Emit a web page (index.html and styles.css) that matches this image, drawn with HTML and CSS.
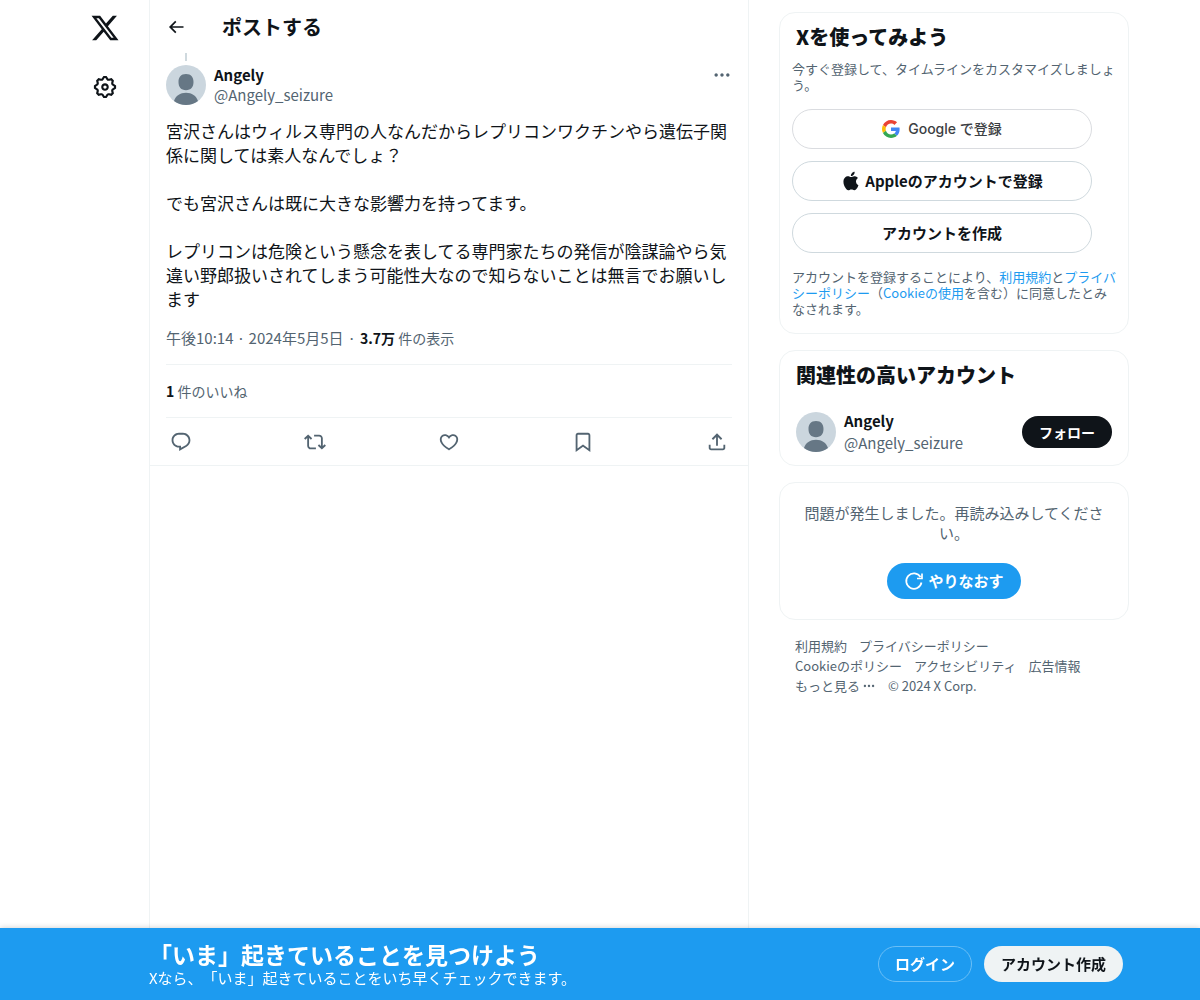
FILE: index.html
```html
<!DOCTYPE html>
<html lang="ja">
<head>
  <meta charset="UTF-8" />
  <meta name="viewport" content="width=device-width, initial-scale=1.0"/>
  <title>Angely / X</title>
  <link rel="stylesheet" href="styles.css">
</head>
<body>
  <div class="layout">
    <nav class="rail">
      <a href="#" class="rail-link" aria-label="X">
        <svg class="icon-logo" viewBox="0 0 24 24"><path d="M18.244 2.25h3.308l-7.227 8.26 8.502 11.24H16.17l-5.214-6.817L4.99 21.75H1.68l7.73-8.835L1.254 2.25H8.08l4.713 6.231zm-1.161 17.52h1.833L7.084 4.126H5.117z"/></svg>
      </a>
      <a href="#" class="rail-link" aria-label="設定">
        <svg class="icon-settings" viewBox="0 0 24 24"><path d="M10.54 1.75h2.92l1.57 2.36c.11.17.32.25.53.21l2.53-.59 2.17 2.17-.58 2.54c-.05.2.04.41.21.53l2.36 1.57v2.92l-2.36 1.57c-.17.12-.26.33-.21.53l.58 2.54-2.17 2.17-2.53-.59c-.21-.04-.42.04-.53.21l-1.57 2.36h-2.92l-1.58-2.36c-.11-.17-.32-.25-.52-.21l-2.54.59-2.17-2.17.58-2.54c.05-.2-.03-.41-.21-.53l-2.35-1.57v-2.92L4.1 8.97c.18-.12.26-.33.21-.53L3.73 5.9 5.9 3.73l2.54.59c.2.04.41-.04.52-.21l1.58-2.36zm1.07 2l-.98 1.47C10.05 6.08 9 6.5 7.99 6.27l-1.46-.34-.6.6.33 1.46c.24 1.01-.18 2.07-1.05 2.64l-1.46.98v.78l1.46.98c.87.57 1.29 1.63 1.05 2.64l-.33 1.46.6.6 1.46-.34c1.01-.23 2.06.19 2.64 1.05l.98 1.47h.78l.97-1.47c.58-.86 1.63-1.28 2.65-1.05l1.45.34.61-.6-.34-1.46c-.23-1.01.18-2.07 1.05-2.64l1.47-.98v-.78l-1.47-.98c-.87-.57-1.28-1.63-1.05-2.64l.34-1.46-.61-.6-1.45.34c-1.02.23-2.07-.19-2.65-1.05l-.97-1.47h-.78zM12 10.5c-.83 0-1.5.67-1.5 1.5s.67 1.5 1.5 1.5c.82 0 1.5-.67 1.5-1.5s-.68-1.5-1.5-1.5zM8.5 12c0-1.93 1.56-3.5 3.5-3.5 1.93 0 3.5 1.57 3.5 3.5s-1.57 3.5-3.5 3.5c-1.94 0-3.5-1.57-3.5-3.5z"/></svg>
      </a>
    </nav>

    <main class="timeline">
      <header class="timeline-header">
        <button class="icon-button" aria-label="戻る">
          <svg class="icon-back" viewBox="0 0 24 24"><path d="M7.414 13l5.043 5.04-1.414 1.42L3.586 12l7.457-7.46 1.414 1.42L7.414 11H21v2H7.414z"/></svg>
        </button>
        <h1>ポストする</h1>
      </header>

      <article class="post">
        <div class="thread-line"></div>
        <div class="post-author">
          <svg class="avatar" viewBox="0 0 40 40">
            <circle cx="20" cy="20" r="20" fill="#cbd6de"/>
            <path d="M20 9c5.200 0 7.500 3.300 7.500 8 0 5-2.500 8.200-7.500 8.200s-7.500-3.200-7.500-8.200c0-4.700 2.300-8 7.500-8zM8 36c1.600-5.300 6.200-8.300 12-8.300S30.400 30.700 32 36a20 20 0 0 1-24 0z" fill="#667785"/>
          </svg>
          <div class="user-names">
            <a href="#" class="user-name">Angely</a>
            <a href="#" class="user-handle">@Angely_seizure</a>
          </div>
          <button class="icon-button more" aria-label="もっと見る">
            <svg class="icon-more" viewBox="0 0 24 24"><path d="M3 12c0-1.100.9-2 2-2s2 .9 2 2-.9 2-2 2-2-.9-2-2zm9 2c1.100 0 2-.9 2-2s-.9-2-2-2-2 .9-2 2 .9 2 2 2zm7 0c1.100 0 2-.9 2-2s-.9-2-2-2-2 .9-2 2 .9 2 2 2z"/></svg>
          </button>
        </div>

        <div class="post-text">宮沢さんはウィルス専門の人なんだからレプリコンワクチンやら遺伝子関係に関しては素人なんでしょ？

でも宮沢さんは既に大きな影響力を持ってます。

レプリコンは危険という懸念を表してる専門家たちの発信が陰謀論やら気違い野郎扱いされてしまう可能性大なので知らないことは無言でお願いします</div>

        <div class="post-meta">
          <a href="#" class="post-date">午後10:14 · 2024年5月5日</a>
          <span>·</span>
          <span class="count"><strong>3.7万</strong> 件の表示</span>
        </div>
        <div class="post-likes"><a href="#" class="count"><strong>1</strong> 件のいいね</a></div>

        <div class="post-actions">
          <button class="icon-button" aria-label="返信">
            <svg class="icon-action" viewBox="0 0 24 24"><path d="M1.751 10c0-4.420 3.584-8 8.005-8h4.366c4.490 0 8.129 3.640 8.129 8.130 0 2.960-1.607 5.680-4.196 7.110l-8.054 4.460v-3.690h-.067c-4.490.1-8.183-3.510-8.183-8.010zm8.005-6c-3.317 0-6.005 2.690-6.005 6 0 3.370 2.770 6.080 6.138 6.010l.351-.01h1.761v2.300l5.087-2.810c1.951-1.080 3.163-3.130 3.163-5.360 0-3.390-2.744-6.130-6.129-6.130H9.756z"/></svg>
          </button>
          <button class="icon-button" aria-label="リポスト">
            <svg class="icon-action" viewBox="0 0 24 24"><path d="M4.500 3.880l4.432 4.140-1.364 1.460L5.500 7.550V16c0 1.100.896 2 2 2H13v2H7.500c-2.209 0-4-1.790-4-4V7.550L1.432 9.480.068 8.020 4.500 3.880zM16.500 6H11V4h5.500c2.209 0 4 1.790 4 4v8.450l2.068-1.930 1.364 1.460-4.432 4.140-4.432-4.140 1.364-1.460 2.068 1.930V8c0-1.100-.896-2-2-2z"/></svg>
          </button>
          <button class="icon-button" aria-label="いいね">
            <svg class="icon-action" viewBox="0 0 24 24"><path d="M16.697 5.500c-1.222-.06-2.679.51-3.890 2.160l-.805 1.090-.806-1.090C9.984 6.010 8.526 5.440 7.304 5.500c-1.243.07-2.349.78-2.910 1.910-.552 1.120-.633 2.780.479 4.820 1.074 1.970 3.257 4.270 7.129 6.610 3.870-2.340 6.052-4.640 7.126-6.610 1.111-2.040 1.030-3.700.477-4.820-.561-1.130-1.666-1.840-2.908-1.910zm4.187 7.690c-1.351 2.480-4.001 5.120-8.379 7.670l-.503.3-.504-.3c-4.379-2.550-7.029-5.190-8.382-7.670-1.360-2.500-1.410-4.860-.514-6.670.887-1.790 2.647-2.910 4.601-3.010 1.651-.09 3.368.56 4.798 2.010 1.429-1.450 3.146-2.100 4.796-2.010 1.954.1 3.714 1.220 4.601 3.010.896 1.810.846 4.170-.514 6.670z"/></svg>
          </button>
          <button class="icon-button" aria-label="ブックマーク">
            <svg class="icon-action" viewBox="0 0 24 24"><path d="M4 4.500C4 3.120 5.119 2 6.500 2h11C18.881 2 20 3.120 20 4.500v18.440l-8-5.710-8 5.710V4.500zM6.500 4c-.276 0-.5.22-.5.5v14.560l6-4.290 6 4.290V4.500c0-.28-.224-.5-.5-.5h-11z"/></svg>
          </button>
          <button class="icon-button" aria-label="共有">
            <svg class="icon-action" viewBox="0 0 24 24"><path d="M12 2.590l5.700 5.700-1.410 1.420L13 6.410V16h-2V6.410l-3.300 3.300-1.410-1.420L12 2.590zM21 15l-.02 3.510c0 1.380-1.120 2.490-2.500 2.490H5.500C4.110 21 3 19.880 3 18.500V15h2v3.500c0 .28.22.5.5.5h12.980c.28 0 .5-.22.5-.5L19 15h2z"/></svg>
          </button>
        </div>
      </article>
    </main>

    <aside class="sidebar">
      <section class="card signup">
        <h2>Xを使ってみよう</h2>
        <p>今すぐ登録して、タイムラインをカスタマイズしましょう。</p>
        <div class="signup-buttons">
          <button class="button outline google">
            <svg class="icon-google" viewBox="0 0 48 48">
              <path fill="#EA4335" d="M24 9.500c3.540 0 6.710 1.220 9.210 3.600l6.850-6.850C35.900 2.380 30.470 0 24 0 14.620 0 6.510 5.380 2.560 13.220l7.980 6.190C12.430 13.720 17.740 9.500 24 9.500z"/>
              <path fill="#4285F4" d="M46.980 24.550c0-1.570-.15-3.090-.38-4.550H24v9.020h12.940c-.58 2.960-2.260 5.480-4.780 7.180l7.730 6c4.510-4.180 7.090-10.360 7.090-17.650z"/>
              <path fill="#FBBC05" d="M10.530 28.590c-.48-1.450-.76-2.990-.76-4.590s.27-3.140.76-4.590l-7.980-6.190C.92 16.460 0 20.120 0 24c0 3.880.92 7.540 2.560 10.780l7.970-6.190z"/>
              <path fill="#34A853" d="M24 48c6.480 0 11.930-2.130 15.890-5.810l-7.730-6c-2.150 1.450-4.920 2.300-8.160 2.300-6.260 0-11.570-4.220-13.470-9.910l-7.980 6.190C6.510 42.620 14.620 48 24 48z"/>
            </svg>
            Google で登録
          </button>
          <button class="button outline apple">
            <svg class="icon-apple" viewBox="0 0 24 24"><path d="M16.365 1.430c0 1.140-.493 2.270-1.177 3.080-.744.9-1.990 1.570-2.987 1.570-.12 0-.23-.02-.3-.03-.01-.06-.04-.22-.04-.39 0-1.150.572-2.270 1.206-2.980.804-.94 2.142-1.640 3.248-1.680.03.13.05.28.05.43zm4.565 15.710c-.03.07-.463 1.580-1.518 3.120-.945 1.340-1.940 2.710-3.430 2.710-1.517 0-1.900-.88-3.630-.88-1.698 0-2.302.91-3.670.91-1.377 0-2.332-1.260-3.428-2.800-1.287-1.820-2.323-4.630-2.323-7.280 0-4.280 2.797-6.550 5.552-6.550 1.448 0 2.675.95 3.600.95.865 0 2.222-1.010 3.902-1.010.613 0 2.886.06 4.374 2.190-.13.09-2.383 1.370-2.383 4.190 0 3.260 2.854 4.420 2.955 4.450z"/></svg>
            Appleのアカウントで登録
          </button>
          <button class="button outline">アカウントを作成</button>
        </div>
        <p>アカウントを登録することにより、<a href="#">利用規約</a>と<a href="#">プライバシーポリシー</a>（<a href="#">Cookieの使用</a>を含む）に同意したとみなされます。</p>
      </section>

      <section class="card related">
        <h2>関連性の高いアカウント</h2>
        <div class="related-user">
          <svg class="avatar" viewBox="0 0 40 40">
            <circle cx="20" cy="20" r="20" fill="#cbd6de"/>
            <path d="M20 9c5.200 0 7.500 3.300 7.500 8 0 5-2.500 8.200-7.500 8.200s-7.500-3.200-7.500-8.200c0-4.700 2.300-8 7.500-8zM8 36c1.600-5.300 6.200-8.300 12-8.300S30.400 30.700 32 36a20 20 0 0 1-24 0z" fill="#667785"/>
          </svg>
          <div class="user-names">
            <a href="#" class="user-name">Angely</a>
            <a href="#" class="user-handle">@Angely_seizure</a>
          </div>
          <button class="button follow">フォロー</button>
        </div>
      </section>

      <section class="card error">
        <p>問題が発生しました。再読み込みしてください。</p>
        <button class="button retry">
          <svg class="icon-retry" viewBox="0 0 20 20"><path d="M17.500 11.500A7.700 7.700 0 1 1 16.500 6M18 2.500V7.500h-5" fill="none" stroke="#fff" stroke-width="1.700"/></svg>
          やりなおす
        </button>
      </section>

      <footer class="links">
        <a href="#">利用規約</a>
        <a href="#">プライバシーポリシー</a>
        <a href="#">Cookieのポリシー</a>
        <a href="#">アクセシビリティ</a>
        <a href="#">広告情報</a>
        <button class="links-more">もっと見る
          <svg class="icon-dots" viewBox="0 0 24 24"><path d="M3 12c0-1.100.9-2 2-2s2 .9 2 2-.9 2-2 2-2-.9-2-2zm9 2c1.100 0 2-.9 2-2s-.9-2-2-2-2 .9-2 2 .9 2 2 2zm7 0c1.100 0 2-.9 2-2s-.9-2-2-2-2 .9-2 2 .9 2 2 2z"/></svg>
        </button>
        <span>© 2024 X Corp.</span>
      </footer>
    </aside>
  </div>

  <div class="login-bar">
    <div class="login-bar-inner">
      <div class="login-text">
        <strong>「いま」起きていることを見つけよう</strong>
        <span>Xなら、「いま」起きていることをいち早くチェックできます。</span>
      </div>
      <button class="button login">ログイン</button>
      <button class="button create">アカウント作成</button>
    </div>
  </div>
</body>
</html>
```
FILE: styles.css
```css
:root {
  --text: #0f1419;
  --muted: #536471;
  --blue: #1d9bf0;
  --border: #eff3f4;
}

* {
  box-sizing: border-box;
}

body {
  margin: 0;
  background-color: #fff;
  color: var(--text);
  font-family: "Noto Sans CJK JP", sans-serif;
  font-size: 15px;
  line-height: 20px;
  text-spacing-trim: space-all;
}

h1,
h2,
p {
  margin: 0;
}

h1,
h2 {
  font-size: 20px;
  line-height: 24px;
}

a {
  color: inherit;
  text-decoration: none;
}

svg {
  display: block;
  flex-shrink: 0;
  fill: currentColor;
}

button {
  padding: 0;
  border: 0;
  background: none;
  color: inherit;
  font: inherit;
  cursor: pointer;
}

.layout {
  display: flex;
  justify-content: center;
  min-height: 100vh;
}

/* left rail */

.rail {
  display: flex;
  flex-direction: column;
  align-items: center;
  gap: 9px;
  width: 88px;
  padding-top: 3px;
}

.rail-link {
  display: flex;
  align-items: center;
  justify-content: center;
  width: 50px;
  height: 50px;
}

.icon-logo {
  width: 30px;
  height: 30px;
}

.icon-settings {
  width: 26px;
  height: 26px;
}

/* post */

.timeline {
  flex: 0 1 600px;
  border: solid var(--border);
  border-width: 0 1px;
}

.timeline-header {
  display: flex;
  align-items: center;
  gap: 36px;
  height: 53px;
  padding: 0 16px;
}

.icon-button {
  display: flex;
  align-items: center;
  justify-content: center;
  color: var(--muted);
}

.timeline-header .icon-button {
  width: 20px;
  color: var(--text);
}

.icon-back,
.icon-more {
  width: 20px;
  height: 20px;
}

.post {
  padding: 0 16px;
  border-bottom: 1px solid var(--border);
}

.thread-line {
  width: 2px;
  height: 8px;
  margin: 0 19px 4px;
  background-color: #cfd9de;
}

.post-author {
  display: flex;
  align-items: flex-start;
  gap: 8px;
}

.avatar {
  width: 40px;
  height: 40px;
}

.user-names {
  display: flex;
  flex: 1;
  flex-direction: column;
}

.user-name {
  font-weight: 700;
}

.user-handle {
  color: var(--muted);
}

.post-text {
  margin-top: 14px;
  font-size: 17px;
  line-height: 24px;
  white-space: pre-wrap;
}

.post-meta {
  display: flex;
  gap: 4px;
  padding: 17px 0 16px;
  color: var(--muted);
  border-bottom: 1px solid var(--border);
}

.post-likes {
  padding: 16px 0;
  border-bottom: 1px solid var(--border);
}

.count {
  color: var(--muted);
  font-size: 14px;
}

.count strong {
  color: var(--text);
}

.post-actions {
  display: flex;
  justify-content: space-between;
}

.post-actions .icon-button {
  width: 30px;
  height: 47px;
}

.icon-action {
  width: 22px;
  height: 22px;
}

/* sidebar */

.sidebar {
  flex: 0 0 390px;
  padding: 12px 10px 90px 30px;
}

.card {
  margin-bottom: 16px;
  padding: 12px;
  border: 1px solid var(--border);
  border-radius: 16px;
}

.card h2 {
  padding: 0 4px;
  font-weight: 800;
}

.signup {
  padding-bottom: 16px;
}

.signup p {
  margin-top: 12px;
  color: var(--muted);
  font-size: 13px;
  line-height: 16px;
}

.signup p a {
  color: var(--blue);
}

.signup-buttons {
  display: flex;
  flex-direction: column;
  gap: 12px;
  max-width: 300px;
  margin: 16px 0;
}

.button {
  display: flex;
  align-items: center;
  justify-content: center;
  gap: 4px;
  height: 36px;
  padding: 0 16px;
  border: 1px solid transparent;
  border-radius: 20px;
  font-weight: 700;
  white-space: nowrap;
}

.outline {
  height: 40px;
  border-color: #cfd9de;
}

.google {
  gap: 8px;
  border-color: #dadce0;
  color: #3c4043;
  font-family: Inter, "Noto Sans CJK JP", sans-serif;
  font-size: 14px;
  font-weight: 500;
}

.icon-google {
  width: 18px;
  height: 18px;
}

.icon-apple,
.icon-retry {
  width: 20px;
  height: 20px;
}

.related-user {
  display: flex;
  align-items: center;
  gap: 8px;
  padding: 24px 4px 0;
}

.related-user .user-names {
  gap: 2px;
}

.follow {
  height: 32px;
  background-color: var(--text);
  color: #fff;
  font-size: 14px;
}

.error {
  display: flex;
  flex-direction: column;
  align-items: center;
  gap: 20px;
  padding: 20px;
  color: var(--muted);
  text-align: center;
}

.retry {
  background-color: var(--blue);
  color: #fff;
}

.links {
  display: flex;
  flex-wrap: wrap;
  column-gap: 12px;
  padding: 0 32px 0 16px;
  color: var(--muted);
  font-size: 13px;
}

.links-more {
  display: flex;
  align-items: center;
  gap: 2px;
}

.icon-dots {
  width: 14px;
  height: 14px;
}

/* bottom bar */

.login-bar {
  position: fixed;
  right: 0;
  bottom: 0;
  left: 0;
  background-color: var(--blue);
  box-shadow: 0 0 6px rgba(0, 0, 0, 0.2);
  color: #fff;
}

.login-bar-inner {
  display: flex;
  align-items: center;
  gap: 12px;
  max-width: 1078px;
  height: 72px;
  margin: 0 auto;
  padding: 0 16px 0 88px;
}

.login-text {
  display: flex;
  flex: 1;
  flex-direction: column;
}

.login-text strong {
  font-size: 23px;
  line-height: 28px;
}

.login {
  border-color: #6bbff6;
}

.create {
  background-color: var(--border);
  color: var(--text);
}
```
